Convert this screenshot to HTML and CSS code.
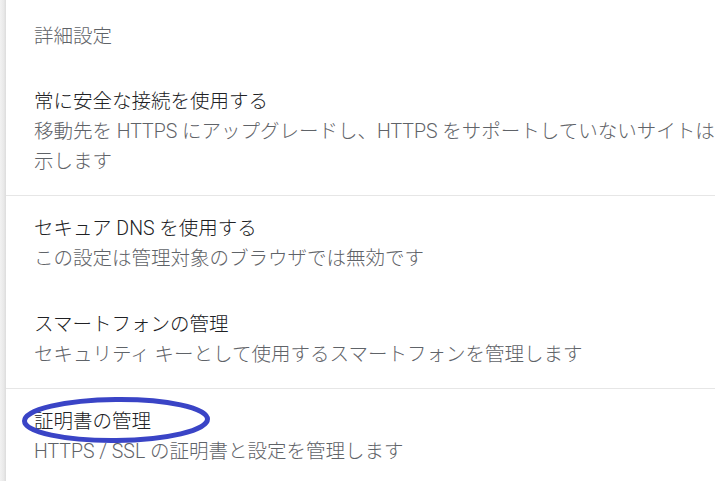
FILE: index.html
```html
<!DOCTYPE html>
<html lang="ja">
<head>
<meta charset="utf-8">
<title>詳細設定</title>
<link rel="stylesheet" href="styles.css">
</head>
<body>
<div class="page">
  <div class="gutter"></div>
  <main class="card">
    <div class="header">詳細設定</div>
    <div class="row">
      <div class="title">常に安全な接続を使用する</div>
      <div class="sub">移動先を HTTPS にアップグレードし、HTTPS をサポートしていないサイトは読み込む前に警告を表<br>示します</div>
    </div>
    <div class="row divided">
      <div class="title">セキュア DNS を使用する</div>
      <div class="sub">この設定は管理対象のブラウザでは無効です</div>
    </div>
    <div class="row">
      <div class="title">スマートフォンの管理</div>
      <div class="sub">セキュリティ キーとして使用するスマートフォンを管理します</div>
    </div>
    <div class="row divided">
      <div class="title">証明書の管理</div>
      <div class="sub">HTTPS / SSL の証明書と設定を管理します</div>
    </div>
  </main>
  <svg class="mark" width="200" height="54" viewBox="0 0 200 54" aria-hidden="true">
    <ellipse cx="97" cy="26" rx="91.5" ry="20.5" fill="none" stroke="#3a44c6" stroke-width="5" transform="rotate(-0.6 97 26)"/>
  </svg>
</div>
</body>
</html>
```
FILE: styles.css
```css
html, body {
  margin: 0;
  padding: 0;
  background: #ffffff;
  overflow: hidden;
}

body {
  font-family: Roboto, "Noto Sans CJK JP", "Noto Sans", sans-serif;
  font-size: 19.5px;
  font-weight: 300;
  line-height: 30px;
}

.page {
  position: relative;
  display: flex;
  width: 1100px;
  min-height: 481px;
}

.gutter {
  width: 6px;
  flex: none;
  background: linear-gradient(to right, #f2f2f2 0, #e9e9e9 60%, #dcdcdc 100%);
}

.card {
  flex: 1;
  background: #ffffff;
}

.header {
  color: #5f6368;
  padding: 22px 0 17px 28px;
}

.row {
  padding: 18px 0 18px 28px;
}

.divided {
  border-top: 1px solid #e6e6e6;
}

.title {
  color: #202124;
}

.sub {
  color: #5f6368;
}

.mark {
  position: absolute;
  left: 19px;
  top: 394px;
}
```
